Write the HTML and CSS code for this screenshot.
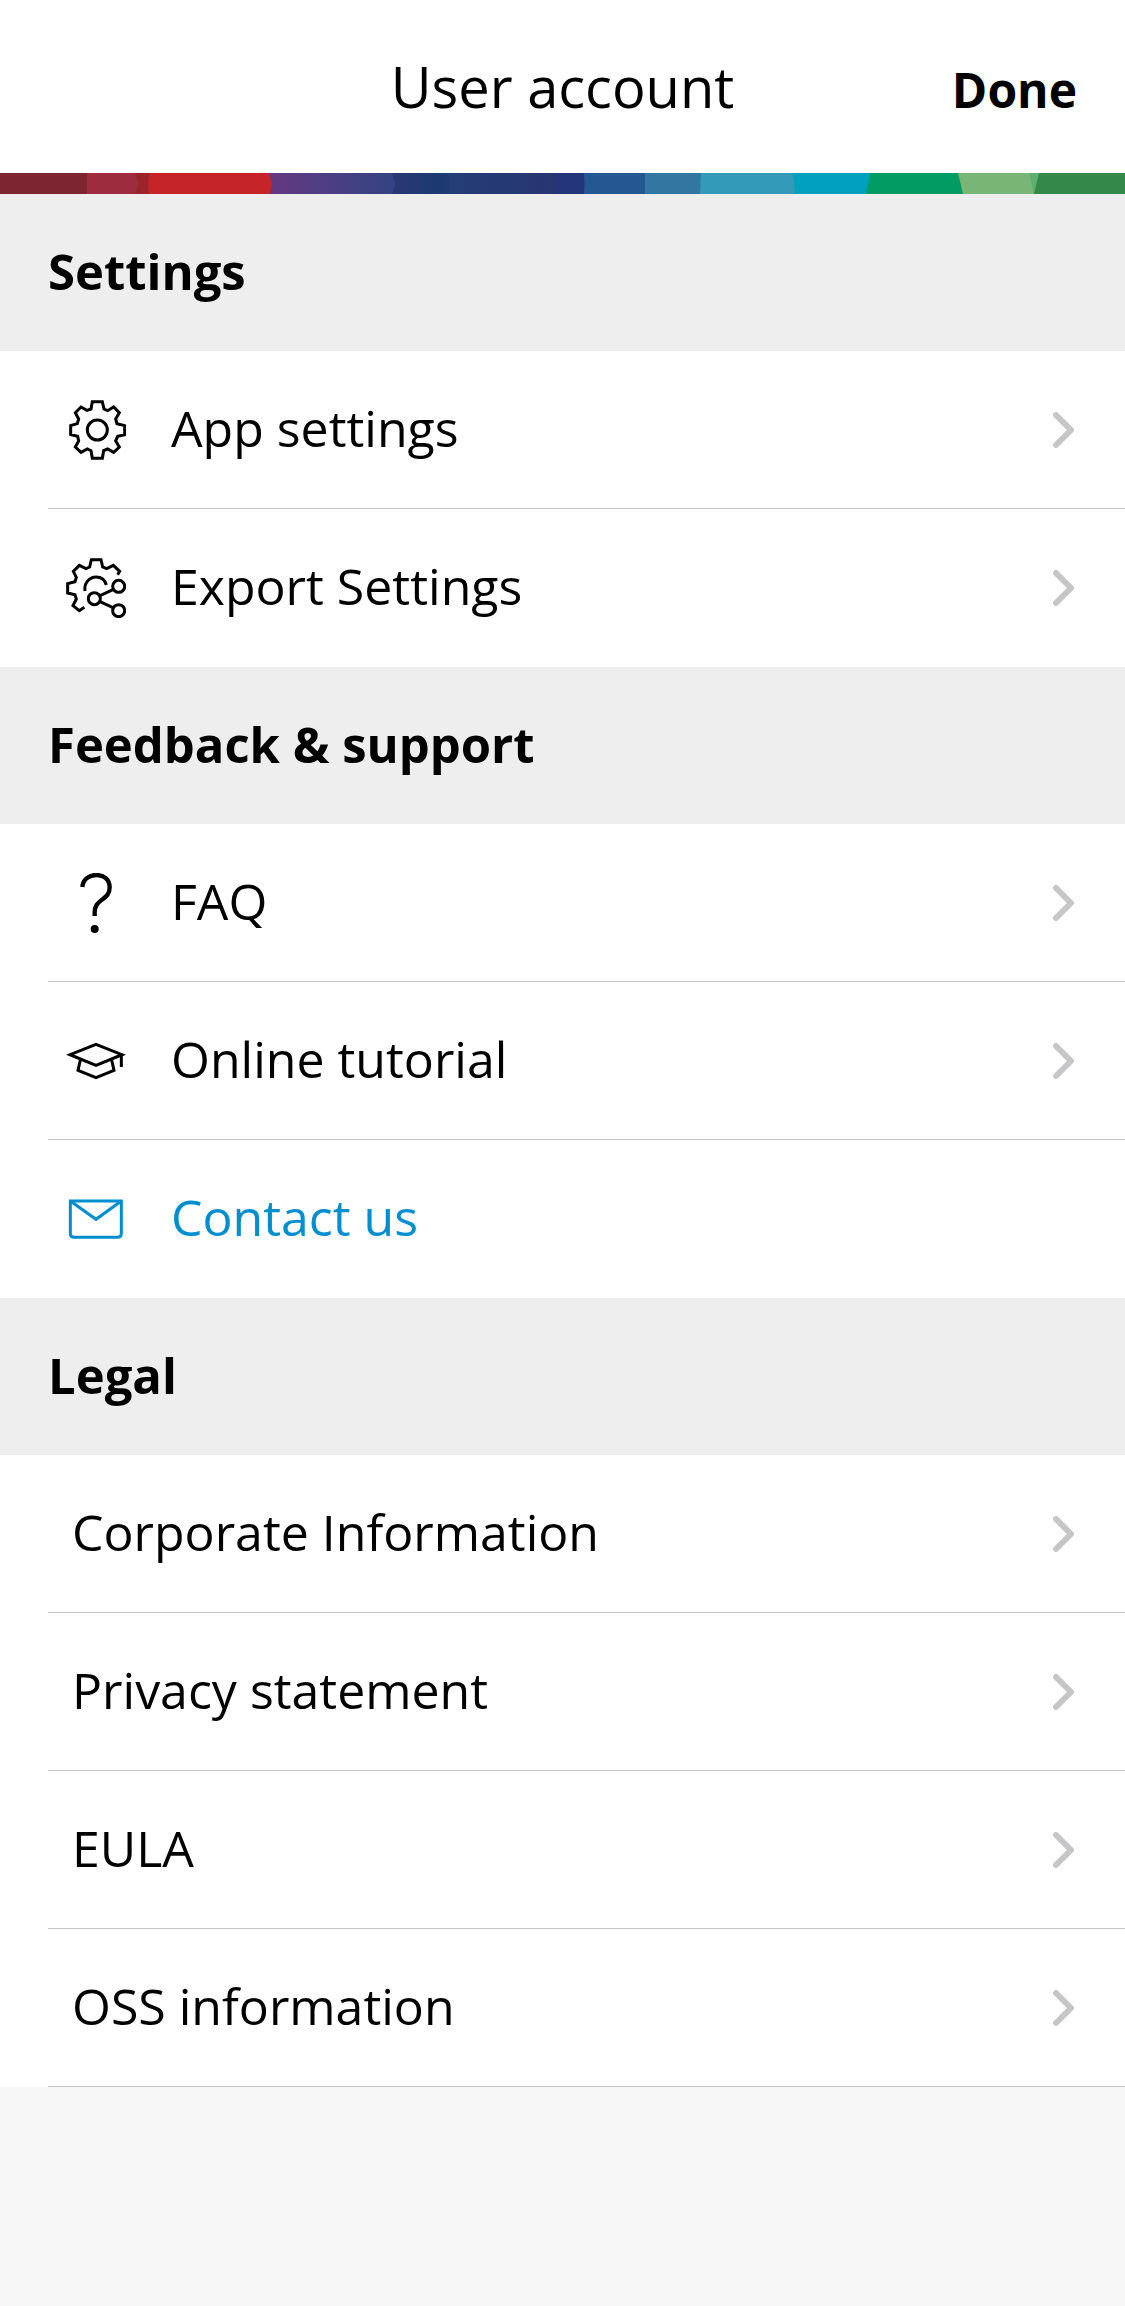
FILE: index.html
```html
<!DOCTYPE html>
<html lang="en">
<head>
  <meta charset="UTF-8">
  <meta name="viewport" content="width=device-width, initial-scale=1.0">
  <title>User account</title>
  <link rel="stylesheet" href="styles.css">
</head>
<body>
  <!-- shared chevron -->
  <svg class="defs" aria-hidden="true">
    <symbol id="chevron" viewBox="0 0 24 40">
      <path d="M5 5 L20 20 L5 35" />
    </symbol>
  </svg>

  <header class="header">
    <h1>User account</h1>
    <button type="button" class="done">Done</button>
  </header>

  <svg class="stripe" viewBox="0 0 1125 21" preserveAspectRatio="none" aria-hidden="true">
    <defs>
      <linearGradient id="violet">
        <stop offset="0" stop-color="#653881" />
        <stop offset="0.3" stop-color="#573c83" />
        <stop offset="1" stop-color="#324482" />
      </linearGradient>
      <linearGradient id="navy">
        <stop offset="0" stop-color="#2c3775" />
        <stop offset="0.8" stop-color="#1c3a70" />
        <stop offset="1" stop-color="#1e3b73" />
      </linearGradient>
      <linearGradient id="indigo">
        <stop offset="0" stop-color="#233e77" />
        <stop offset="1" stop-color="#283571" />
      </linearGradient>
    </defs>
    <rect width="1125" height="21" fill="#338a48" />
    <path fill="#5aaf71" d="M1020 0 H1039 L1034 21 H1020 Z" />
    <path fill="#79b675" d="M950 0 H1029 L1034 21 H950 Z" />
    <path fill="#009c63" d="M860 0 H958 L963 21 H860 Z" />
    <path fill="#00a1be" d="M790 0 H870 L866 21 H790 Z" />
    <path fill="#339bb9" d="M690 0 H793 L795 21 H690 Z" />
    <path fill="#3276a2" d="M640 0 H701 L700 21 H640 Z" />
    <path fill="#255893" d="M570 0 H645 V21 H570 Z" />
    <path fill="#24357a" d="M550 0 H584 Q585 10 584 21 H550 Z" />
    <path fill="url(#indigo)" d="M445 0 H557 V21 H445 Z" />
    <path fill="url(#navy)" d="M385 0 H449 V21 H385 Z" />
    <path fill="url(#violet)" d="M265 0 H392 L395 11 L392 21 H265 Z" />
    <path fill="#c52429" d="M145 0 H269 L272 11 L270 21 H145 Z" />
    <path fill="#99242a" d="M130 0 H150 Q147 10 149 21 H130 Z" />
    <path fill="#9e2c3f" d="M80 0 H135 L139 11 L135 21 H80 Z" />
    <path fill="#7d2531" d="M0 0 H87 V21 H0 Z" />
  </svg>

  <main>
    <section>
      <h2>Settings</h2>
      <ul class="list">
        <li>
          <a href="#app-settings" class="row">
            <svg class="icon" viewBox="0 0 180 180" aria-hidden="true">
              <path d="M79 5 H109 L114 27 L125 32 L143 21 L160 38 L149 57 L153 71 L176 77 V104 L155 109 L149 123 L160 141 L143 157 L125 147 L113 152 L109 175 H79 L75 152 L64 147 L45 157 L28 141 L38 123 L35 109 L14 104 V77 L34 71 L38 57 L28 38 L45 21 L63 31 L75 27 Z" />
              <circle cx="94" cy="90" r="30" />
            </svg>
            <span class="label">App settings</span>
            <svg class="chevron" aria-hidden="true"><use href="#chevron" /></svg>
          </a>
        </li>
        <li>
          <a href="#export-settings" class="row">
            <svg class="icon" viewBox="0 0 180 180" aria-hidden="true">
              <path d="M155 50 L161 40 L142 22 L122 32 L110 27 L105 5 H76 L71 27 L60 32 L40 22 L22 40 L31 58 L27 71 L5 77 V105 L27 110 L31 123 L21 143 L40 158 L55 148" />
              <path d="M57 99 C53 76 70 57 90 57 C105 57 117 66 121 81" />
              <circle cx="85" cy="122" r="18" />
              <circle cx="158" cy="85" r="18" />
              <circle cx="158" cy="158" r="18" />
              <path d="M102 113 L141 95 M102 131 L141 149" />
            </svg>
            <span class="label">Export Settings</span>
            <svg class="chevron" aria-hidden="true"><use href="#chevron" /></svg>
          </a>
        </li>
      </ul>
    </section>

    <section>
      <h2>Feedback &amp; support</h2>
      <ul class="list">
        <li>
          <a href="#faq" class="row">
            <svg class="icon" viewBox="0 0 180 180" aria-hidden="true">
              <path class="thick" d="M49 42 C51 19 69 6 91 6 C115 6 131 21 131 43 C131 62 122 70 108 80 C94 91 86 99 86 118 V129" />
              <circle class="dot" cx="86" cy="168" r="12" />
            </svg>
            <span class="label">FAQ</span>
            <svg class="chevron" aria-hidden="true"><use href="#chevron" /></svg>
          </a>
        </li>
        <li>
          <a href="#tutorial" class="row">
            <svg class="icon" viewBox="0 0 180 180" aria-hidden="true">
              <path d="M90 40 L168 71 L90 103 L12 71 Z" />
              <path d="M43 87 L36 118 L90 140 L144 118 L137 87" />
              <path d="M166 72 V108" />
            </svg>
            <span class="label">Online tutorial</span>
            <svg class="chevron" aria-hidden="true"><use href="#chevron" /></svg>
          </a>
        </li>
        <li>
          <a href="#contact" class="row contact">
            <svg class="icon" viewBox="0 0 180 180" aria-hidden="true">
              <path d="M13 36 H166 V133 Q166 145 154 145 H25 Q13 145 13 133 Z" />
              <path d="M14 37 L90 91 L165 37" />
            </svg>
            <span class="label">Contact us</span>
          </a>
        </li>
      </ul>
    </section>

    <section>
      <h2>Legal</h2>
      <ul class="list legal">
        <li>
          <a href="#corporate" class="row">
            <span class="label">Corporate Information</span>
            <svg class="chevron" aria-hidden="true"><use href="#chevron" /></svg>
          </a>
        </li>
        <li>
          <a href="#privacy" class="row">
            <span class="label">Privacy statement</span>
            <svg class="chevron" aria-hidden="true"><use href="#chevron" /></svg>
          </a>
        </li>
        <li>
          <a href="#eula" class="row">
            <span class="label">EULA</span>
            <svg class="chevron" aria-hidden="true"><use href="#chevron" /></svg>
          </a>
        </li>
        <li>
          <a href="#oss" class="row">
            <span class="label">OSS information</span>
            <svg class="chevron" aria-hidden="true"><use href="#chevron" /></svg>
          </a>
        </li>
      </ul>
    </section>
  </main>
</body>
</html>
```
FILE: styles.css
```css
* {
  box-sizing: border-box;
}

body {
  margin: 0;
  min-height: 100vh;
  background: #f7f7f7;
  color: #000;
  font-family: "Open Sans", "Noto Sans", sans-serif;
  font-size: 50px;
}

.defs {
  display: none;
}

.header {
  display: grid;
  grid-template-columns: 1fr auto 1fr;
  align-items: baseline;
  padding: 46px 48px 47px;
  background: #fff;
}

h1 {
  grid-column: 2;
  margin: 0;
  font-size: 56px;
  font-weight: 400;
  line-height: 80px;
}

.done {
  justify-self: end;
  padding: 0;
  border: none;
  background: none;
  color: inherit;
  font-family: inherit;
  font-size: 48px;
  font-weight: 700;
  line-height: 60px;
  cursor: pointer;
}

.stripe {
  display: block;
  width: 100%;
  height: 21px;
}

h2 {
  margin: 0;
  padding: 45px 48px 48px;
  background: #eee;
  font-size: 49px;
  font-weight: 700;
  line-height: 64px;
}

.list {
  margin: 0;
  padding: 0 0 0 48px;
  list-style: none;
  background: #fff;
}

.list li {
  border-bottom: 1px solid #c6c6c8;
}

.list li:last-child {
  border-bottom-color: #fff;
}

.list.legal li:last-child {
  border-bottom-color: #c6c6c8;
}

.row {
  display: flex;
  align-items: center;
  gap: 45px;
  min-height: 157px;
  padding: 0 50px 0 18px;
  color: inherit;
  text-decoration: none;
}

.legal .row {
  padding-left: 24px;
}

.contact {
  color: #008ecf;
}

.label {
  flex: 1;
  padding-bottom: 4px;
  line-height: 64px;
}

.icon {
  flex: none;
  width: 60px;
  height: 60px;
  fill: none;
  stroke: currentColor;
  stroke-width: 9;
}

.icon .thick {
  stroke-width: 13;
}

.icon .dot {
  fill: currentColor;
  stroke: none;
}

.chevron {
  flex: none;
  width: 24px;
  height: 40px;
  fill: none;
  stroke: #c6c6c8;
  stroke-width: 6;
  stroke-linecap: round;
  stroke-linejoin: round;
}
```
